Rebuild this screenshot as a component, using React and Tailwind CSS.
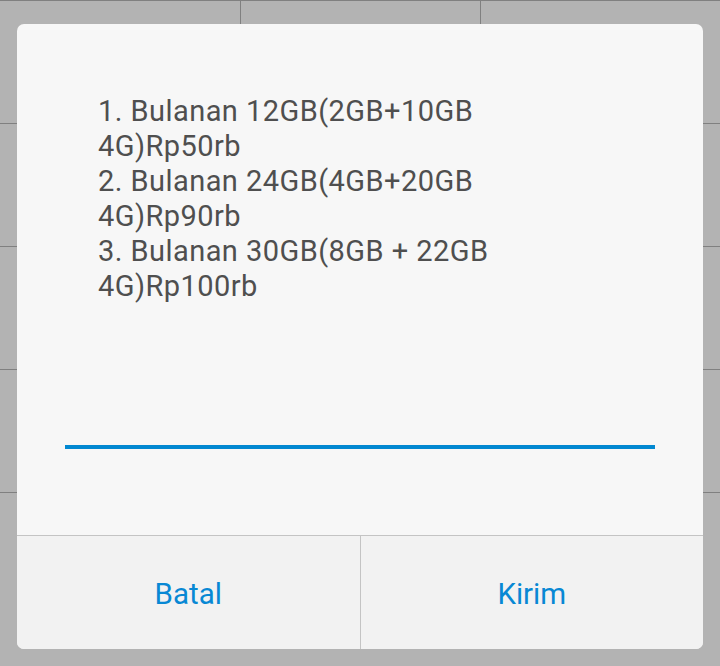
import React from 'react';

const packages = [
  '1. Bulanan 12GB(2GB+10GB 4G)Rp50rb',
  '2. Bulanan 24GB(4GB+20GB 4G)Rp90rb',
  '3. Bulanan 30GB(8GB + 22GB 4G)Rp100rb',
];

const App = () => {
  const rows = [0, 1, 2, 3, 4];

  return (
    <div className="relative w-[720px] h-[666px] overflow-hidden bg-[#b3b3b3]" style={{ fontFamily: 'Roboto, "Noto Sans", sans-serif' }}>
      {/* home screen grid behind the dialog */}
      <div className="flex flex-col">
        {rows.map((r) => (
          <div key={r} className="flex h-[123px] border-t border-[#808080]">
            <div className="w-[240px]" />
            <div className="w-[240px] border-l border-[#808080]" />
            <div className="w-[240px] border-l border-[#808080]" />
          </div>
        ))}
      </div>

      {/* USSD dialog */}
      <div className="absolute left-[17px] top-[24px] w-[686px] h-[625px] rounded-[7px] overflow-hidden flex flex-col bg-[#f7f7f7]">
        <div className="flex-1 flex flex-col">
          <div className="mt-[70px] ml-[81px] w-[450px] text-[29px] leading-[35px] tracking-[0.45px] text-[#4f4f4f]">
            {packages.map((p) => (
              <div key={p}>{p}</div>
            ))}
          </div>
          <div className="mt-[141px] mx-[48px] h-[4px] bg-[#0288d1]" />
        </div>
        <div className="h-[114px] flex border-t border-[#c4c4c4] bg-[#f2f2f2]">
          <button className="flex-1 flex items-center justify-center pt-[4px] text-[29.5px] text-[#0888d4]">Batal</button>
          <div className="w-px bg-[#c4c4c4]" />
          <button className="flex-1 flex items-center justify-center pt-[4px] text-[29.5px] text-[#0888d4]">Kirim</button>
        </div>
      </div>
    </div>
  );
};

export default App;
